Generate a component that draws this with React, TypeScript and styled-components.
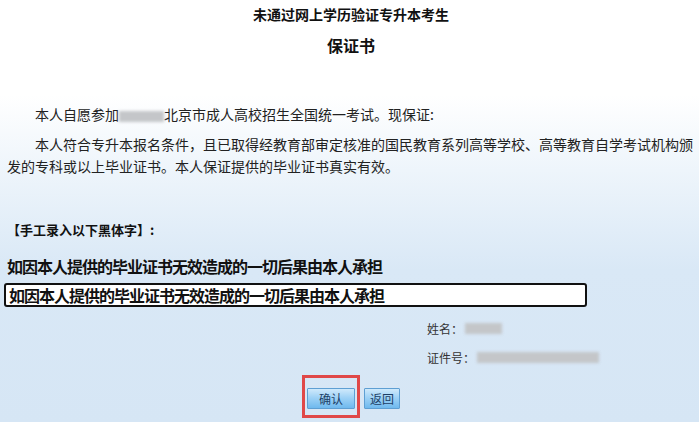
import React from "react";
import styled, { createGlobalStyle } from "styled-components";

const GlobalStyle = createGlobalStyle`
  html, body {
    margin: 0;
    padding: 0;
  }
  body {
    font-family: "Noto Sans CJK SC", "Noto Sans", sans-serif;
    color: #222;
    background: #d8e7f5;
  }
`;

const Page = styled.div`
  width: 699px;
  height: 422px;
  overflow: hidden;
  box-sizing: border-box;
  padding: 4px 4px 0 7px;
  background: linear-gradient(
    to bottom,
    #ffffff 0px,
    #ffffff 95px,
    #eef5fb 170px,
    #d9e8f6 270px,
    #d6e6f5 422px
  );
`;

const Title = styled.h1<{ $size: number; $gap: number }>`
  margin: ${(p) => p.$gap}px 0 0;
  text-align: center;
  font-size: ${(p) => p.$size}px;
  line-height: 20px;
  font-weight: 700;
  color: #111;
`;

const Para = styled.p<{ $gap: number }>`
  margin: ${(p) => p.$gap}px 0 0;
  font-size: 14px;
  line-height: 22px;
  text-indent: 2em;
  color: #222;
`;

const Blurred = styled.span<{ $w: number }>`
  display: inline-block;
  width: ${(p) => p.$w}px;
  height: 11px;
  vertical-align: middle;
  background: #c4c6c9;
  filter: blur(1.5px);
  text-indent: 0;
`;

const Label = styled.div`
  margin-top: 43px;
  font-size: 13px;
  line-height: 20px;
  font-weight: 700;
  color: #111;
`;

const Sample = styled.div`
  margin-top: 15px;
  font-size: 16px;
  letter-spacing: -1px;
  line-height: 22px;
  font-weight: 700;
  color: #111;
`;

const Entry = styled.input`
  display: block;
  margin: 6px 0 0 -3px;
  width: 583px;
  height: 24px;
  box-sizing: border-box;
  border: 2px solid #111;
  border-radius: 3px;
  padding: 0 3px;
  background: #fff;
  font-family: "Noto Sans CJK SC", sans-serif;
  font-size: 16px;
  letter-spacing: -1px;
  font-weight: 700;
  color: #111;
  outline: none;
`;

const InfoRow = styled.div<{ $gap: number }>`
  display: flex;
  align-items: center;
  margin: ${(p) => p.$gap}px 0 0 420px;
  height: 20px;
  font-size: 12px;
  color: #333;
`;

const InfoLabel = styled.span`
  margin-right: 2px;
`;

const ButtonRow = styled.div`
  display: flex;
  align-items: flex-start;
  margin: 8px 0 0 295px;
  gap: 4px;
`;

const Highlight = styled.div`
  border: 3px solid #e04848;
  padding: 7px 2px 6px;
`;

const Btn = styled.button<{ $w: number }>`
  width: ${(p) => p.$w}px;
  height: 21px;
  padding: 0;
  border: 1px solid #5e9fd3;
  border-radius: 1px;
  background: linear-gradient(to bottom, #cfe9fb 0%, #9fd2f6 45%, #6fb9ee 100%);
  font-family: "Noto Sans CJK SC", sans-serif;
  font-size: 12px;
  line-height: 19px;
  color: #1d3f66;
  cursor: pointer;
`;

const Plain = styled.div`
  padding-top: 10px;
`;

export default function App() {
  return (
    <>
      <GlobalStyle />
      <Page>
        <Title $size={14} $gap={0}>
          未通过网上学历验证专升本考生
        </Title>
        <Title $size={16} $gap={11}>
          保证书
        </Title>
        <Para $gap={48}>
          本人自愿参加<Blurred $w={45} />北京市成人高校招生全国统一考试。现保证:
        </Para>
        <Para $gap={8}>
          本人符合专升本报名条件，且已取得经教育部审定核准的国民教育系列高等学校、高等教育自学考试机构颁发的专科或以上毕业证书。本人保证提供的毕业证书真实有效。
        </Para>
        <Label>【手工录入以下黑体字】:</Label>
        <Sample>如因本人提供的毕业证书无效造成的一切后果由本人承担</Sample>
        <Entry defaultValue="如因本人提供的毕业证书无效造成的一切后果由本人承担" />
        <InfoRow $gap={11}>
          <InfoLabel>姓名：</InfoLabel>
          <Blurred $w={37} />
        </InfoRow>
        <InfoRow $gap={9}>
          <InfoLabel>证件号：</InfoLabel>
          <Blurred $w={122} />
        </InfoRow>
        <ButtonRow>
          <Highlight>
            <Btn $w={48}>确认</Btn>
          </Highlight>
          <Plain>
            <Btn $w={36}>返回</Btn>
          </Plain>
        </ButtonRow>
      </Page>
    </>
  );
}
